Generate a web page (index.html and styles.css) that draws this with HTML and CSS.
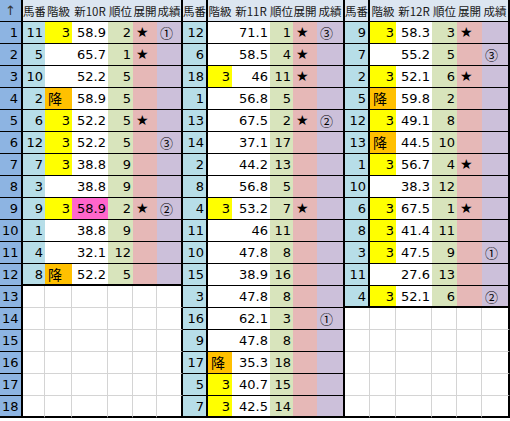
FILE: index.html
```html
<!DOCTYPE html>
<html lang="ja">
<head>
<meta charset="utf-8">
<title>新R</title>
<link rel="stylesheet" href="styles.css">
</head>
<body>
<div class="g">
<div class="c hd corner tr">↑</div><div class="c hd">馬番</div><div class="c hd">階級</div><div class="c hd">新10R</div><div class="c hd">順位</div><div class="c hd">展開</div><div class="c hd tr">成績</div><div class="c hd tr">馬番</div><div class="c hd">階級</div><div class="c hd">新11R</div><div class="c hd">順位</div><div class="c hd">展開</div><div class="c hd tr">成績</div><div class="c hd tr">馬番</div><div class="c hd">階級</div><div class="c hd">新12R</div><div class="c hd">順位</div><div class="c hd">展開</div><div class="c hd tr">成績</div>

<div class="c rn tr">1</div><div class="c b">11</div><div class="c k y">3</div><div class="c n">58.9</div><div class="c r">2</div><div class="c t">★</div><div class="c s tr">①</div><div class="c b tr">12</div><div class="c k"></div><div class="c n">71.1</div><div class="c r">1</div><div class="c t">★</div><div class="c s tr">③</div><div class="c b tr">9</div><div class="c k y">3</div><div class="c n">58.3</div><div class="c r">3</div><div class="c t">★</div><div class="c s tr"></div>

<div class="c rn tr">2</div><div class="c b">5</div><div class="c k"></div><div class="c n">65.7</div><div class="c r">1</div><div class="c t">★</div><div class="c s tr"></div><div class="c b tr">6</div><div class="c k"></div><div class="c n">58.5</div><div class="c r">4</div><div class="c t">★</div><div class="c s tr"></div><div class="c b tr">7</div><div class="c k"></div><div class="c n">55.2</div><div class="c r">5</div><div class="c t"></div><div class="c s tr">③</div>

<div class="c rn tr">3</div><div class="c b">10</div><div class="c k"></div><div class="c n">52.2</div><div class="c r">5</div><div class="c t"></div><div class="c s tr"></div><div class="c b tr">18</div><div class="c k y">3</div><div class="c n">46</div><div class="c r">11</div><div class="c t">★</div><div class="c s tr"></div><div class="c b tr">2</div><div class="c k y">3</div><div class="c n">52.1</div><div class="c r">6</div><div class="c t">★</div><div class="c s tr"></div>

<div class="c rn tr">4</div><div class="c b">2</div><div class="c k o">降</div><div class="c n">58.9</div><div class="c r">5</div><div class="c t"></div><div class="c s tr"></div><div class="c b tr">1</div><div class="c k"></div><div class="c n">56.8</div><div class="c r">5</div><div class="c t"></div><div class="c s tr"></div><div class="c b tr">5</div><div class="c k o">降</div><div class="c n">59.8</div><div class="c r">2</div><div class="c t"></div><div class="c s tr"></div>

<div class="c rn tr">5</div><div class="c b">6</div><div class="c k y">3</div><div class="c n">52.2</div><div class="c r">5</div><div class="c t">★</div><div class="c s tr"></div><div class="c b tr">13</div><div class="c k"></div><div class="c n">67.5</div><div class="c r">2</div><div class="c t">★</div><div class="c s tr">②</div><div class="c b tr">12</div><div class="c k y">3</div><div class="c n">49.1</div><div class="c r">8</div><div class="c t"></div><div class="c s tr"></div>

<div class="c rn tr">6</div><div class="c b">12</div><div class="c k y">3</div><div class="c n">52.2</div><div class="c r">5</div><div class="c t"></div><div class="c s tr">③</div><div class="c b tr">14</div><div class="c k"></div><div class="c n">37.1</div><div class="c r">17</div><div class="c t"></div><div class="c s tr"></div><div class="c b tr">13</div><div class="c k o">降</div><div class="c n">44.5</div><div class="c r">10</div><div class="c t"></div><div class="c s tr"></div>

<div class="c rn tr">7</div><div class="c b">7</div><div class="c k y">3</div><div class="c n">38.8</div><div class="c r">9</div><div class="c t"></div><div class="c s tr"></div><div class="c b tr">2</div><div class="c k"></div><div class="c n">44.2</div><div class="c r">13</div><div class="c t"></div><div class="c s tr"></div><div class="c b tr">1</div><div class="c k y">3</div><div class="c n">56.7</div><div class="c r">4</div><div class="c t">★</div><div class="c s tr"></div>

<div class="c rn tr">8</div><div class="c b">3</div><div class="c k"></div><div class="c n">38.8</div><div class="c r">9</div><div class="c t"></div><div class="c s tr"></div><div class="c b tr">8</div><div class="c k"></div><div class="c n">56.8</div><div class="c r">5</div><div class="c t"></div><div class="c s tr"></div><div class="c b tr">10</div><div class="c k"></div><div class="c n">38.3</div><div class="c r">12</div><div class="c t"></div><div class="c s tr"></div>

<div class="c rn tr">9</div><div class="c b">9</div><div class="c k y">3</div><div class="c n p">58.9</div><div class="c r">2</div><div class="c t">★</div><div class="c s tr">②</div><div class="c b tr">4</div><div class="c k y">3</div><div class="c n">53.2</div><div class="c r">7</div><div class="c t">★</div><div class="c s tr"></div><div class="c b tr">6</div><div class="c k y">3</div><div class="c n">67.5</div><div class="c r">1</div><div class="c t">★</div><div class="c s tr"></div>

<div class="c rn tr">10</div><div class="c b">1</div><div class="c k"></div><div class="c n">38.8</div><div class="c r">9</div><div class="c t"></div><div class="c s tr"></div><div class="c b tr">11</div><div class="c k"></div><div class="c n">46</div><div class="c r">11</div><div class="c t"></div><div class="c s tr"></div><div class="c b tr">8</div><div class="c k y">3</div><div class="c n">41.4</div><div class="c r">11</div><div class="c t"></div><div class="c s tr"></div>

<div class="c rn tr">11</div><div class="c b">4</div><div class="c k"></div><div class="c n">32.1</div><div class="c r">12</div><div class="c t"></div><div class="c s tr"></div><div class="c b tr">10</div><div class="c k"></div><div class="c n">47.8</div><div class="c r">8</div><div class="c t"></div><div class="c s tr"></div><div class="c b tr">3</div><div class="c k y">3</div><div class="c n">47.5</div><div class="c r">9</div><div class="c t"></div><div class="c s tr">①</div>

<div class="c rn tr">12</div><div class="c b tb">8</div><div class="c k o tb">降</div><div class="c n tb">52.2</div><div class="c r tb">5</div><div class="c t tb"></div><div class="c s tr tb"></div><div class="c b tr">15</div><div class="c k"></div><div class="c n">38.9</div><div class="c r">16</div><div class="c t"></div><div class="c s tr"></div><div class="c b tr">11</div><div class="c k"></div><div class="c n">27.6</div><div class="c r">13</div><div class="c t"></div><div class="c s tr"></div>

<div class="c rn tr">13</div><div class="c e"></div><div class="c e"></div><div class="c e"></div><div class="c e"></div><div class="c e"></div><div class="c e tr"></div><div class="c b tr">3</div><div class="c k"></div><div class="c n">47.8</div><div class="c r">8</div><div class="c t"></div><div class="c s tr"></div><div class="c b tr tb">4</div><div class="c k y tb">3</div><div class="c n tb">52.1</div><div class="c r tb">6</div><div class="c t tb"></div><div class="c s tr tb">②</div>

<div class="c rn tr">14</div><div class="c e"></div><div class="c e"></div><div class="c e"></div><div class="c e"></div><div class="c e"></div><div class="c e tr"></div><div class="c b tr">16</div><div class="c k"></div><div class="c n">62.1</div><div class="c r">3</div><div class="c t"></div><div class="c s tr">①</div><div class="c e"></div><div class="c e"></div><div class="c e"></div><div class="c e"></div><div class="c e"></div><div class="c e tr"></div>

<div class="c rn tr">15</div><div class="c e"></div><div class="c e"></div><div class="c e"></div><div class="c e"></div><div class="c e"></div><div class="c e tr"></div><div class="c b tr">9</div><div class="c k"></div><div class="c n">47.8</div><div class="c r">8</div><div class="c t"></div><div class="c s tr"></div><div class="c e"></div><div class="c e"></div><div class="c e"></div><div class="c e"></div><div class="c e"></div><div class="c e tr"></div>

<div class="c rn tr">16</div><div class="c e"></div><div class="c e"></div><div class="c e"></div><div class="c e"></div><div class="c e"></div><div class="c e tr"></div><div class="c b tr">17</div><div class="c k o">降</div><div class="c n">35.3</div><div class="c r">18</div><div class="c t"></div><div class="c s tr"></div><div class="c e"></div><div class="c e"></div><div class="c e"></div><div class="c e"></div><div class="c e"></div><div class="c e tr"></div>

<div class="c rn tr">17</div><div class="c e"></div><div class="c e"></div><div class="c e"></div><div class="c e"></div><div class="c e"></div><div class="c e tr"></div><div class="c b tr">5</div><div class="c k y">3</div><div class="c n">40.7</div><div class="c r">15</div><div class="c t"></div><div class="c s tr"></div><div class="c e"></div><div class="c e"></div><div class="c e"></div><div class="c e"></div><div class="c e"></div><div class="c e tr"></div>

<div class="c rn tr tb">18</div><div class="c e tb"></div><div class="c e tb"></div><div class="c e tb"></div><div class="c e tb"></div><div class="c e tb"></div><div class="c e tr tb"></div><div class="c b tr tb">7</div><div class="c k y tb">3</div><div class="c n tb">42.5</div><div class="c r tb">14</div><div class="c t tb"></div><div class="c s tr tb"></div><div class="c e tb"></div><div class="c e tb"></div><div class="c e tb"></div><div class="c e tb"></div><div class="c e tb"></div><div class="c e tr tb"></div>
</div>
</body>
</html>
```

FILE: styles.css
```css
html, body {
  margin: 0;
  padding: 0;
  background: #fff;
}

.g {
  display: grid;
  grid-template-columns: 23px 22px 27px 36px 25px 24px 26px 25px 24px 38px 23px 24px 28px 25px 26px 36px 25px 25px 28px;
  grid-template-rows: repeat(19, 22px);
  font-family: "DejaVu Sans", "Noto Sans CJK JP", sans-serif;
  font-size: 13px;
  color: #000;
}

.c {
  box-sizing: border-box;
  border-bottom: 1px solid #000;
  line-height: 21px;
  padding: 0 2px 0 2px;
  white-space: nowrap;
  overflow: hidden;
  text-align: right;
  background: #fff;
}

.hd {
  background: #dce6f1;
  text-align: center;
  font-family: "Noto Sans CJK JP", sans-serif;
  font-size: 11.5px;
  line-height: 23px;
  padding: 0;
  overflow: visible;
  color: #1a1a1a;
}

.corner {
  background: #8db4e2;
  font-family: "DejaVu Sans", sans-serif;
  font-size: 13px;
  line-height: 21px;
  color: #333;
}

.rn {
  background: #8db4e2;
  padding-right: 3px;
}

.b { background: #b7dee8; }
.y { background: #ffff00; }
.o { background: #ffc000; text-align: left; font-family: "Noto Sans CJK JP", sans-serif; font-size: 14px; padding-left: 3px; }
.p { background: #ff66cc; }
.r { background: #d8e4bc; }
.t { background: #e6b8b7; text-align: left; padding-left: 3px; font-size: 14px; }
.s { background: #ccc0da; text-align: left; padding-left: 3px; font-family: "Noto Sans CJK JP", sans-serif; font-size: 13px; }

.e {
  border-bottom-color: #d4d4d4;
  border-right: 1px solid #d4d4d4;
}

.tr { border-right: 2px solid #000; }
.tb { border-bottom: 2px solid #000; }
```
